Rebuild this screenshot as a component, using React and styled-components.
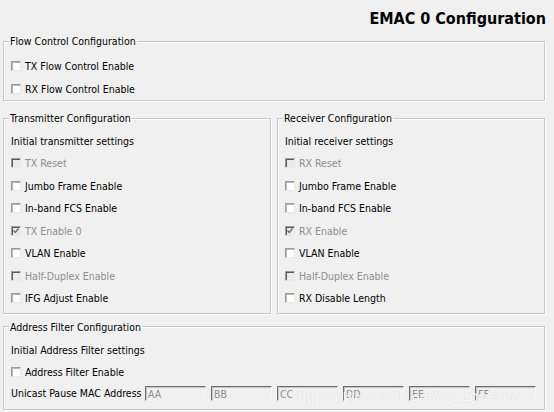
import React from 'react';
import styled, { createGlobalStyle } from 'styled-components';

const GlobalStyle = createGlobalStyle`
  html, body {
    margin: 0;
    padding: 0;
    background: #f0f0f0;
  }
  body {
    width: 554px;
    height: 412px;
    overflow: hidden;
    font-family: "DejaVu Sans Condensed", "DejaVu Sans", sans-serif;
    font-stretch: condensed;
    font-size: 10.5px;
    color: #000;
  }
`;

const Page = styled.div`
  padding: 0 9px 0 3px;
`;

const Title = styled.h1`
  margin: 0 -1px 0 0;
  height: 35px;
  box-sizing: border-box;
  padding-top: 9px;
  text-align: right;
  font-size: 16px;
  line-height: 20px;
  font-weight: bold;
`;

const Group = styled.fieldset`
  position: relative;
  margin: ${(p) => p.$top || 0}px 0 0 0;
  padding: 0;
  min-width: 0;
  border: 1px solid #c9c9c9;
  box-shadow: inset 1px 1px #fdfdfd, 1px 1px #fdfdfd;
`;

const Legend = styled.legend`
  margin-left: 5px;
  padding: 0 1px;
  font-size: 10.5px;
  line-height: 12px;
`;

const Body = styled.div`
  padding: ${(p) => p.$pad};
  display: flex;
  flex-direction: column;
`;

const Columns = styled.div`
  display: grid;
  grid-template-columns: 268px 1fr;
  column-gap: 6px;
  margin-top: 11px;
`;

const Row = styled.div`
  display: flex;
  align-items: center;
  height: ${(p) => p.$h}px;
  color: ${(p) => (p.$disabled ? '#8f8f8f' : '#000')};
  white-space: nowrap;
`;

const Box = styled.span`
  position: relative;
  width: 10px;
  height: 10px;
  box-sizing: border-box;
  margin: 0 4px 0 0;
  border: 1px solid;
  border-color: #9c9c9c #e8e8e8 #e8e8e8 #9c9c9c;
  box-shadow: inset 1px 1px ${(p) => (p.$disabled ? '#5a5a5a' : '#b8b8b8')};
  background: ${(p) => (p.$disabled ? '#ebebeb' : '#ffffff')};
  flex: none;

  svg {
    position: absolute;
    left: 0;
    top: 0;
  }
`;

const MacLabel = styled.span`
  flex: 0 0 134px;
`;

const MacField = styled.span`
  width: 61px;
  height: 15px;
  box-sizing: border-box;
  margin-right: 5px;
  padding: 1px 0 0 2px;
  line-height: 12px;
  border: 1px solid;
  border-color: #6f6f6f #f4f4f4 #f4f4f4 #6f6f6f;
  box-shadow: inset 1px 1px #c4c4c4;
  background: #f0f0f0;
  color: #8f8f8f;
  flex: none;
`;

const Watermark = styled.span`
  position: absolute;
  left: 294px;
  top: 56px;
  font-family: "Liberation Sans", Arial, sans-serif;
  font-stretch: normal;
  font-size: 15px;
  line-height: 18px;
  color: rgba(255, 255, 255, 0.9);
  text-shadow: 0 0 1px rgba(150, 150, 150, 0.4);
  pointer-events: none;
  white-space: nowrap;
`;

const Check = ({ label, disabled, checked, h = 22.5 }) => (
  <Row $h={h} $disabled={disabled}>
    <Box $disabled={disabled}>
      {checked && (
        <svg width="8" height="8" viewBox="0 0 8 8">
          <polyline points="1.5,3.5 3.3,5.5 6.5,1.5" fill="none" stroke="#6e6e6e" strokeWidth="1.4" />
        </svg>
      )}
    </Box>
    {label}
  </Row>
);

const tx = [
  { label: 'TX Reset', disabled: true },
  { label: 'Jumbo Frame Enable' },
  { label: 'In-band FCS Enable' },
  { label: 'TX Enable 0', disabled: true, checked: true },
  { label: 'VLAN Enable' },
  { label: 'Half-Duplex Enable', disabled: true },
  { label: 'IFG Adjust Enable' },
];

const rx = [
  { label: 'RX Reset', disabled: true },
  { label: 'Jumbo Frame Enable' },
  { label: 'In-band FCS Enable' },
  { label: 'RX Enable', disabled: true, checked: true },
  { label: 'VLAN Enable' },
  { label: 'Half-Duplex Enable', disabled: true },
  { label: 'RX Disable Length' },
];

const mac = ['AA', 'BB', 'CC', 'DD', 'EE', 'FF'];

export default function App() {
  return (
    <>
      <GlobalStyle />
      <Page>
        <Title>EMAC 0 Configuration</Title>

        <Group>
          <Legend>Flow Control Configuration</Legend>
          <Body $pad="7px 0 0 7px">
            <Check label="TX Flow Control Enable" h={23} />
            <Check label="RX Flow Control Enable" h={23} />
          </Body>
        </Group>

        <Columns>
          <Group>
            <Legend>Transmitter Configuration</Legend>
            <Body $pad="5.5px 0 3px 7px">
              <Row $h={22.5}>Initial transmitter settings</Row>
              {tx.map((item) => (
                <Check key={item.label} {...item} />
              ))}
            </Body>
          </Group>
          <Group>
            <Legend>Receiver Configuration</Legend>
            <Body $pad="5.5px 0 3px 7px">
              <Row $h={22.5}>Initial receiver settings</Row>
              {rx.map((item) => (
                <Check key={item.label} {...item} />
              ))}
            </Body>
          </Group>
        </Columns>

        <Group $top={7}>
          <Legend>Address Filter Configuration</Legend>
          <Body $pad="7px 0 5px 7px">
            <Row $h={21.5}>Initial Address Filter settings</Row>
            <Check label="Address Filter Enable" h={21.5} />
            <Row $h={21.5}>
              <MacLabel>Unicast Pause MAC Address</MacLabel>
              {mac.map((m) => (
                <MacField key={m}>{m}</MacField>
              ))}
            </Row>
          </Body>
          <Watermark>https://blog.csdn.net/qq_40052606</Watermark>
        </Group>
      </Page>
    </>
  );
}
